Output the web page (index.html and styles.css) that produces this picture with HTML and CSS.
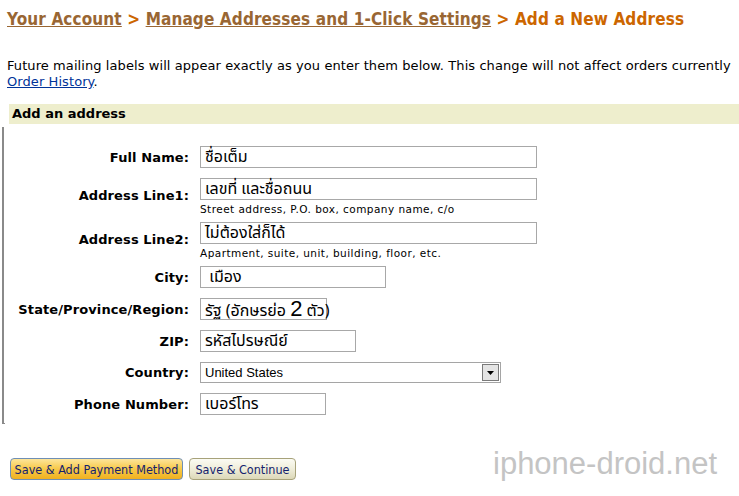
FILE: index.html
```html
<!DOCTYPE html>
<html lang="en">
<head>
  <meta charset="UTF-8" />
  <title>Add a New Address</title>
  <link rel="stylesheet" href="styles.css">
</head>
<body>

<h1 class="crumbs">
  <a href="#">Your Account</a> &gt;
  <a href="#">Manage Addresses and 1-Click Settings</a> &gt;
  Add a New Address
</h1>

<p class="intro">
  Future mailing labels will appear exactly as you enter them below. This change will not affect orders currently<br>
  <a href="#" class="blue">Order History</a>.
</p>

<div class="bar">Add an address</div>

<div class="formbox">
  <div class="grid">
    <label>Full Name:</label>
    <div><div class="field w-full">ชื่อเต็ม</div></div>

    <label>Address Line1:</label>
    <div>
      <div class="field w-full">เลขที่ และชื่อถนน</div>
      <div class="hint">Street address, P.O. box, company name, c/o</div>
    </div>

    <label>Address Line2:</label>
    <div>
      <div class="field w-full">ไม่ต้องใส่ก็ได้</div>
      <div class="hint">Apartment, suite, unit, building, floor, etc.</div>
    </div>

    <label>City:</label>
    <div><div class="field w-city">&nbsp;เมือง</div></div>

    <label>State/Province/Region:</label>
    <div><div class="field w-state">รัฐ (อักษรย่อ <span class="big">2</span> ตัว)</div></div>

    <label>ZIP:</label>
    <div><div class="field w-zip">รหัสไปรษณีย์</div></div>

    <label>Country:</label>
    <div>
      <div class="select">
        <span>United States</span>
        <span class="arrow"><svg width="7" height="4" viewBox="0 0 7 4"><path d="M0 0h7L3.5 4z" fill="#000"/></svg></span>
      </div>
    </div>

    <label>Phone Number:</label>
    <div><div class="field w-phone">เบอร์โทร</div></div>
  </div>
</div>

<div class="buttons">
  <button class="btn gold">Save &amp; Add Payment Method</button>
  <button class="btn plain">Save &amp; Continue</button>
</div>

<div class="watermark">iphone-droid.net</div>

</body>
</html>
```

FILE: styles.css
```css
body {
  margin: 0;
  font-family: "DejaVu Sans", sans-serif;
  color: #000;
  background: #fff;
  position: relative;
  height: 496px;
  overflow: hidden;
}

.crumbs {
  margin: 0;
  padding: 9px 0 0 7px;
  font-family: "DejaVu Sans Condensed", "DejaVu Sans", sans-serif;
  font-size: 17px;
  line-height: 20px;
  font-weight: bold;
  letter-spacing: 0.12px;
  color: #cc6600;
  white-space: nowrap;
}

.crumbs a {
  color: #996633;
}

.intro {
  margin: 29px 0 0 7px;
  font-size: 13px;
  line-height: 16px;
  letter-spacing: 0.08px;
  white-space: nowrap;
}

.blue {
  color: #003399;
}

.bar {
  margin: 14px 0 0 9px;
  height: 20px;
  line-height: 20px;
  padding-left: 3px;
  background: #eeeecd;
  font-size: 13px;
  font-weight: bold;
}

.formbox {
  margin: 3px 0 0 2px;
  border-left: 2px solid #8a8a8a;
  border-bottom: 1px solid #8a8a8a;
  width: 1px;
  padding: 19px 0 8px 0;
}

.grid {
  display: grid;
  grid-template-columns: 185px auto;
  column-gap: 11px;
  row-gap: 10px;
  align-items: center;
  width: 600px;
}

.grid label {
  text-align: right;
  font-size: 13px;
  font-weight: bold;
  letter-spacing: 0.1px;
  white-space: nowrap;
}

.field {
  box-sizing: border-box;
  height: 22px;
  border: 1px solid #a8a8a8;
  padding: 0 4px;
  font-family: "Noto Sans Thai", "Loma", "Garuda", "DejaVu Sans", sans-serif;
  font-size: 16px;
  line-height: 20px;
  white-space: nowrap;
}

.w-full { width: 337px; }
.w-city { width: 186px; }
.w-state { width: 127px; }
.w-zip { width: 156px; }
.w-phone { width: 126px; }

.big {
  font-family: "Liberation Sans", sans-serif;
  font-size: 22px;
}

.hint {
  font-size: 10.5px;
  line-height: 12px;
  letter-spacing: 0.45px;
  margin: 3px 0 -3px 0;
  white-space: nowrap;
}

.select {
  box-sizing: border-box;
  width: 301px;
  height: 21px;
  border: 1px solid #a5a5a5;
  display: flex;
  align-items: center;
  justify-content: space-between;
  padding-left: 4px;
  font-family: "Liberation Sans", sans-serif;
  font-size: 13px;
}

.arrow {
  box-sizing: border-box;
  width: 17px;
  height: 17px;
  margin-right: 1px;
  border: 1px solid #7a7a7a;
  background: #e4e4e4;
  display: flex;
  align-items: center;
  justify-content: center;
}

.buttons {
  display: flex;
  gap: 6px;
  margin: 34px 0 0 10px;
}

.btn {
  height: 22px;
  padding: 0;
  border-radius: 4px;
  font-family: "DejaVu Sans Condensed", sans-serif;
  font-size: 12.5px;
  white-space: nowrap;
  color: #141e6e;
  cursor: pointer;
}

.gold {
  width: 173px;
  border: 1px solid #6f8fb5;
  background: linear-gradient(#fde59b, #f7c948 50%, #f0b020);
}

.plain {
  width: 107px;
  border: 1px solid #a7a27a;
  background: linear-gradient(#fbfbf3, #efedd9 50%, #dcd8b8);
}

.watermark {
  position: absolute;
  left: 493px;
  top: 446px;
  font-family: "Liberation Sans", sans-serif;
  font-size: 31px;
  color: #c4c4c4;
}
```
